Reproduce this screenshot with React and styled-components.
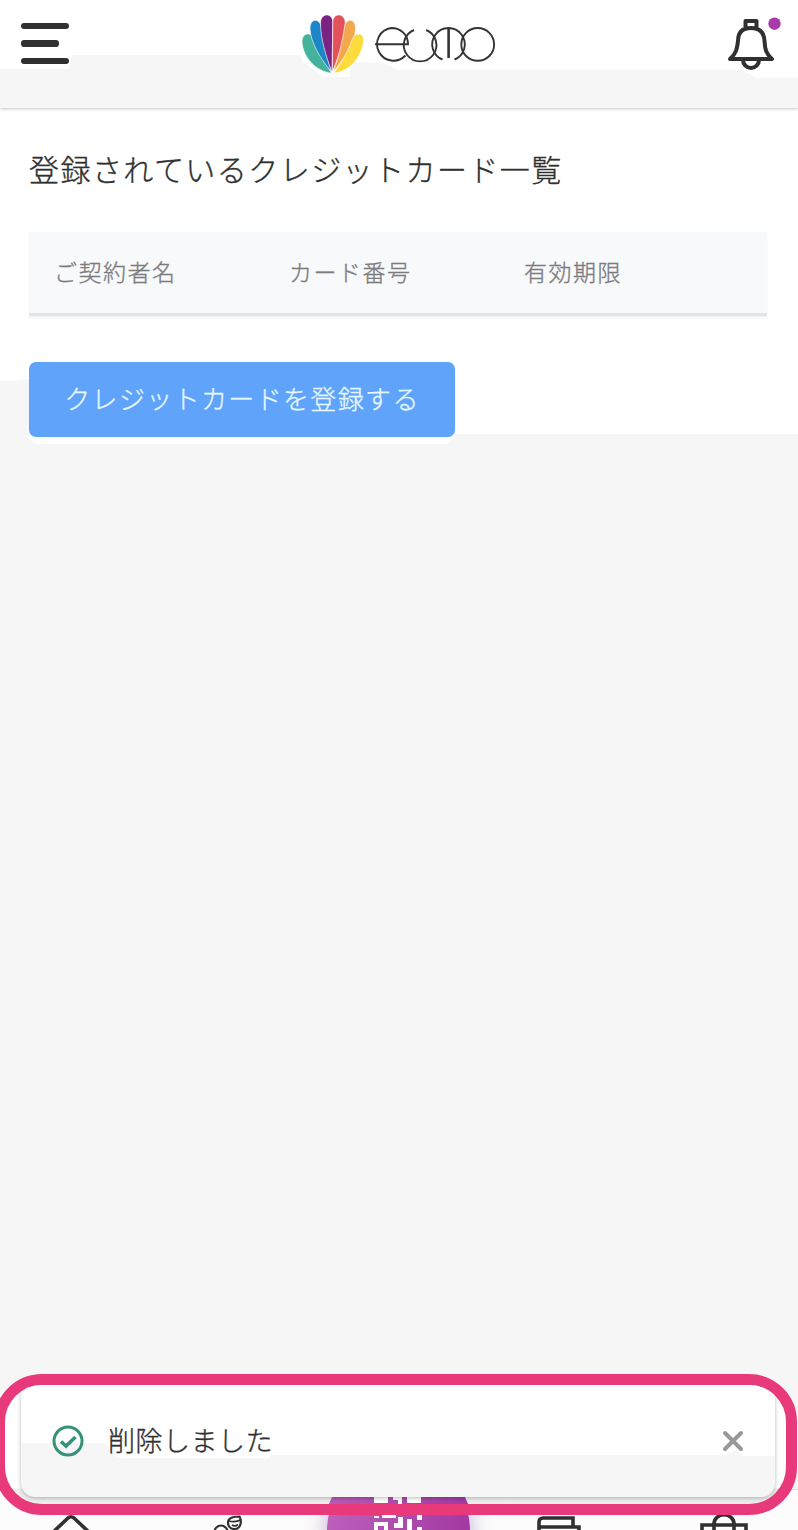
import React from 'react';
import styled, { createGlobalStyle } from 'styled-components';

const Global = createGlobalStyle`
  * { box-sizing: border-box; }
  body { margin: 0; background: #f6f6f6; }
`;

const Screen = styled.div`
  position: relative;
  display: flex;
  flex-direction: column;
  width: 798px;
  height: 1530px;
  overflow: hidden;
  background: #f6f6f6;
  color: #303030;
  font-family: "Noto Sans CJK JP", sans-serif;
  font-weight: 300;
  -webkit-text-stroke: 0.35px currentColor;
`;

const Header = styled.header`
  position: relative;
  z-index: 1;
  flex: none;
  display: grid;
  grid-template-columns: 1fr auto 1fr;
  align-items: start;
  height: 108px;
  padding: 12px 20px 0 18px;
  background: #f6f6f6;
  box-shadow: 0 1px 3px rgba(0, 0, 0, 0.22);

  &::before {
    content: "";
    position: absolute;
    inset: 0;
    z-index: -1;
    background: #fff;
    clip-path: polygon(0 0, 798px 0, 798px 78px, 757px 78px, 742px 70px, 398px 70px, 384px 63px, 352px 62px, 350px 77px, 324px 77px, 303px 62px, 300px 55px, 72px 55px, 69px 69px, 0 69px);
  }
`;

const MenuButton = styled.button`
  display: flex;
  flex-direction: column;
  gap: 11.3px;
  margin: 10.5px 0 0 3px;
  padding: 0;
  width: 48px;
  border: 0;
  background: none;
`;

const MenuLine = styled.span`
  width: ${(p) => (p.$short ? 38 : 48)}px;
  height: 6.4px;
  border-radius: 3px;
  background: #303030;
`;

const BellButton = styled.button`
  justify-self: end;
  margin-right: -4px;
  padding: 0;
  border: 0;
  background: none;
  line-height: 0;
`;

const Content = styled.main`
  position: relative;
  z-index: 0;
  flex: none;
  height: 338px;
  padding: 40px 31px 0 29px;

  &::before {
    content: "";
    position: absolute;
    inset: 0;
    z-index: -1;
    background: #fff;
    clip-path: polygon(0 0, 798px 0, 798px 326px, 455px 326px, 447px 336px, 36px 336px, 29px 330px, 29px 271px, 14px 273px, 0 273px);
  }
`;

const Title = styled.h1`
  margin: 0;
  font-size: 30px;
  line-height: 40px;
  font-weight: 300;
  letter-spacing: 1.45px;
`;

const TableHead = styled.div`
  display: grid;
  grid-template-columns: repeat(3, 235px);
  align-items: center;
  height: 84px;
  margin-top: 44px;
  padding: 0 0 4px 25px;
  background: #f8f9fb;
  border-bottom: 3px solid #e2e4e8;
  box-shadow: 0 2px 2px rgba(0, 0, 0, 0.05);
  color: #7c7c7e;
  font-size: 23px;
  letter-spacing: 1.5px;
`;

const RegisterButton = styled.button`
  display: block;
  width: 426px;
  height: 75px;
  margin-top: 46px;
  padding: 0 0 4px;
  border: 0;
  border-radius: 7px;
  background: #60a3fb;
  color: #e6f7ff;
  font: inherit;
  font-size: 26px;
  letter-spacing: 1.35px;
`;

const Nav = styled.nav`
  position: relative;
  flex: none;
  display: grid;
  grid-template-columns: 142px 168px 176px 145px 186px;
  justify-items: center;
  align-items: start;
  height: 41px;
  margin-top: auto;
  border-top: 1px solid #e0e0e0;
  background: #fcfcfc;
`;

const NavIcon = styled.svg`
  display: block;
  margin-top: ${(p) => p.$top}px;
  fill: none;
  stroke: #303030;
  stroke-width: ${(p) => p.$stroke || 3.6};
`;

const ScanButton = styled.div`
  display: flex;
  justify-content: center;
  width: 143px;
  height: 143px;
  margin-top: -31px;
  padding-top: 38px;
  border-radius: 50%;
  background: linear-gradient(110deg, #bd60bb 10%, #a239a3 85%);
  box-shadow: 0 0 22px rgba(100, 60, 150, 0.4);
`;

const Highlight = styled.div`
  position: absolute;
  left: -6px;
  top: 1374px;
  width: 803px;
  height: 141px;
  border: 11px solid #e83a7b;
  border-radius: 48px;
  background: linear-gradient(#fff 103px, #eee 104px, #ededf0);
  background-clip: padding-box;
  overflow: hidden;
`;

const ScanPeek = styled.div`
  position: absolute;
  left: 322px;
  top: 112px;
  width: 143px;
  height: 9px;
  padding-left: 47px;
  line-height: 0;
  background: linear-gradient(90deg, #b95bb7, #a03aa1);
  clip-path: polygon(5px 0, 138px 0, 142px 9px, 1px 9px);
`;

const Toast = styled.div`
  position: relative;
  display: flex;
  align-items: center;
  width: 754px;
  height: 112px;
  margin-left: 16px;
  padding: 0 31px;
  border-radius: 14px;
  background: #f6f6f6;
  box-shadow: 0 1px 4px rgba(0, 0, 0, 0.28);
  z-index: 0;

  &::before {
    content: "";
    position: absolute;
    inset: 0;
    z-index: -1;
    border-radius: 14px;
    background: #fff;
    clip-path: polygon(0 0, 754px 0, 754px 71px, 723px 71px, 714px 66px, 704px 70px, 250px 70px, 248px 73px, 96px 73px, 84px 58px, 0 58px);
  }
`;

const Message = styled.p`
  flex: 1;
  margin: -2px 0 0 24px;
  font-size: 27px;
  line-height: 40px;
  letter-spacing: 0.5px;
`;

const petals = [
  ['#45b39b', 'M331.500 73 C317 72 303 58 302 42 C302 36 305 33.500 309 34 C313 35 315 38 317 44 C320 53 325 63 331.500 73Z'],
  ['#1c86c8', 'M331.500 72 C319 57 311 42 310 29 C310 18 319 18 321 26 C323 42 327 57 331.500 72Z'],
  ['#7a2385', 'M332 72 C326 57 320.500 38 320.500 23 C320.500 12.500 332.800 12.500 332.800 22 Z'],
  ['#e3515b', 'M332.400 72 L332.800 22 C333 12.500 345.200 12.500 345.200 23 C345 38 338.500 57 332.400 72Z'],
  ['#f3a94b', 'M333 72 C338.500 57 342.500 42 344.700 26 C346.500 18 355.800 18 355.500 29 C355 42 346 57 333 72Z'],
  ['#fbdc3c', 'M334 73 C341 63 347 53 350.500 44 C352.500 38 354.500 34.500 358 34 C362 33.500 364 37 363.500 42 C361 58 349 72 334 73Z'],
];

function Logo() {
  return (
    <svg width="196" height="66" viewBox="300 12 196 66" aria-label="eumo">
      {petals.map(([fill, d]) => (
        <path key={fill} d={d} fill={fill} stroke="#fff" strokeWidth="0.6" />
      ))}
      <g fill="none" stroke="#343434" strokeWidth="1.9">
        <path d="M375 44.300 H408 C408 35 401 28 391.300 28 A16.400 16.400 0 1 0 405.400 55.500" />
        <path d="M414 30 A16.300 16.300 0 1 0 426.200 30" />
        <path d="M442.500 59.500 A16.300 16.300 0 1 1 454.500 59.500" />
        <path d="M448.600 28 V58" strokeWidth="2.600" />
        <circle cx="477.700" cy="44.400" r="16.400" />
      </g>
    </svg>
  );
}

function Bell() {
  return (
    <svg width="56" height="60" viewBox="726 12 56 60" fill="none" stroke="#303030" strokeWidth="4">
      <path d="M745.500 28 V21 H756.500 V28 M730 59 C736 54 737 49 738 41 C738 32 743 28 751 28 C759 28 764 32 764.500 41 C765 49 766 54 772 59 Z" strokeLinejoin="round" />
      <path d="M743 60 A8 8 0 0 0 759 60" />
      <circle cx="774.500" cy="23.700" r="6.200" fill="#a83aaa" stroke="none" />
    </svg>
  );
}

const qrCells = [
  [0, 0, 14, 6], [19, 0, 9, 3], [24, 3, 4, 4], [33, 0, 14, 6],
  [0, 19, 5, 2], [8, 16, 14, 5], [43, 18, 5, 5],
  [20, 26, 9, 5], [24, 20, 5, 8], [33, 22, 5, 11], [43, 30, 5, 5],
];

function QrCode() {
  return (
    <svg width="48" height="60" viewBox="0 0 48 60" fill="#fff">
      {qrCells.map(([x, y, w, h]) => (
        <rect key={`${x}-${y}`} x={x} y={y} width={w} height={h} />
      ))}
      <path d="M0 25 H14 V40 H0Z M4 29 V36 H10 V29Z" fillRule="evenodd" />
    </svg>
  );
}

export default function App() {
  return (
    <Screen>
      <Global />
      <Header>
        <MenuButton aria-label="メニュー">
          <MenuLine />
          <MenuLine $short />
          <MenuLine />
        </MenuButton>
        <Logo />
        <BellButton aria-label="通知"><Bell /></BellButton>
      </Header>
      <Content>
        <Title>登録されているクレジットカード一覧</Title>
        <TableHead>
          <span>ご契約者名</span>
          <span>カード番号</span>
          <span>有効期限</span>
        </TableHead>
        <RegisterButton>クレジットカードを登録する</RegisterButton>
      </Content>
      <Nav>
        <NavIcon $top={24} width="48" height="28" viewBox="0 0 48 28">
          <path d="M2 22 L21 4 Q24 1.500 27 4 L46 22" />
        </NavIcon>
        <NavIcon $top={24} $stroke={2.2} width="34" height="28" viewBox="0 0 34 28">
          <path d="M30.500 2.500 C33 7 32 15 25.500 15 C21 15 19 12 19 8.500 C19 4 24 2.500 30.500 2.500Z" strokeLinejoin="round" />
          <path d="M19.500 7 Q27 8.500 31.500 6 M23 11 Q26 13 29 10.500" strokeWidth="1.700" />
          <circle cx="12" cy="18" r="6.500" />
        </NavIcon>
        <ScanButton><QrCode /></ScanButton>
        <NavIcon $top={26} width="44" height="28" viewBox="0 0 44 28">
          <path d="M2 28 V6 Q2 2 6 2 H36 V11 M2 11 H42 V28" />
        </NavIcon>
        <NavIcon $top={23} width="48" height="28" viewBox="0 0 48 28">
          <path d="M2 28 V12 H46 V28 M14 18 V11 A10 9.300 0 0 1 34 11 V18" />
        </NavIcon>
      </Nav>
      <Highlight>
        <ScanPeek><QrCode /></ScanPeek>
        <Toast>
          <svg width="32" height="32" viewBox="0 0 32 32" fill="none" stroke="#35917a" strokeWidth="3">
            <circle cx="16" cy="16" r="14" />
            <path d="M9 16.500 L14 21 L23.500 12" strokeWidth="3.600" />
          </svg>
          <Message>削除しました</Message>
          <svg width="22" height="22" viewBox="0 0 22 22" stroke="#999" strokeWidth="4" strokeLinecap="round">
            <path d="M3 3 L19 19 M19 3 L3 19" />
          </svg>
        </Toast>
      </Highlight>
    </Screen>
  );
}
